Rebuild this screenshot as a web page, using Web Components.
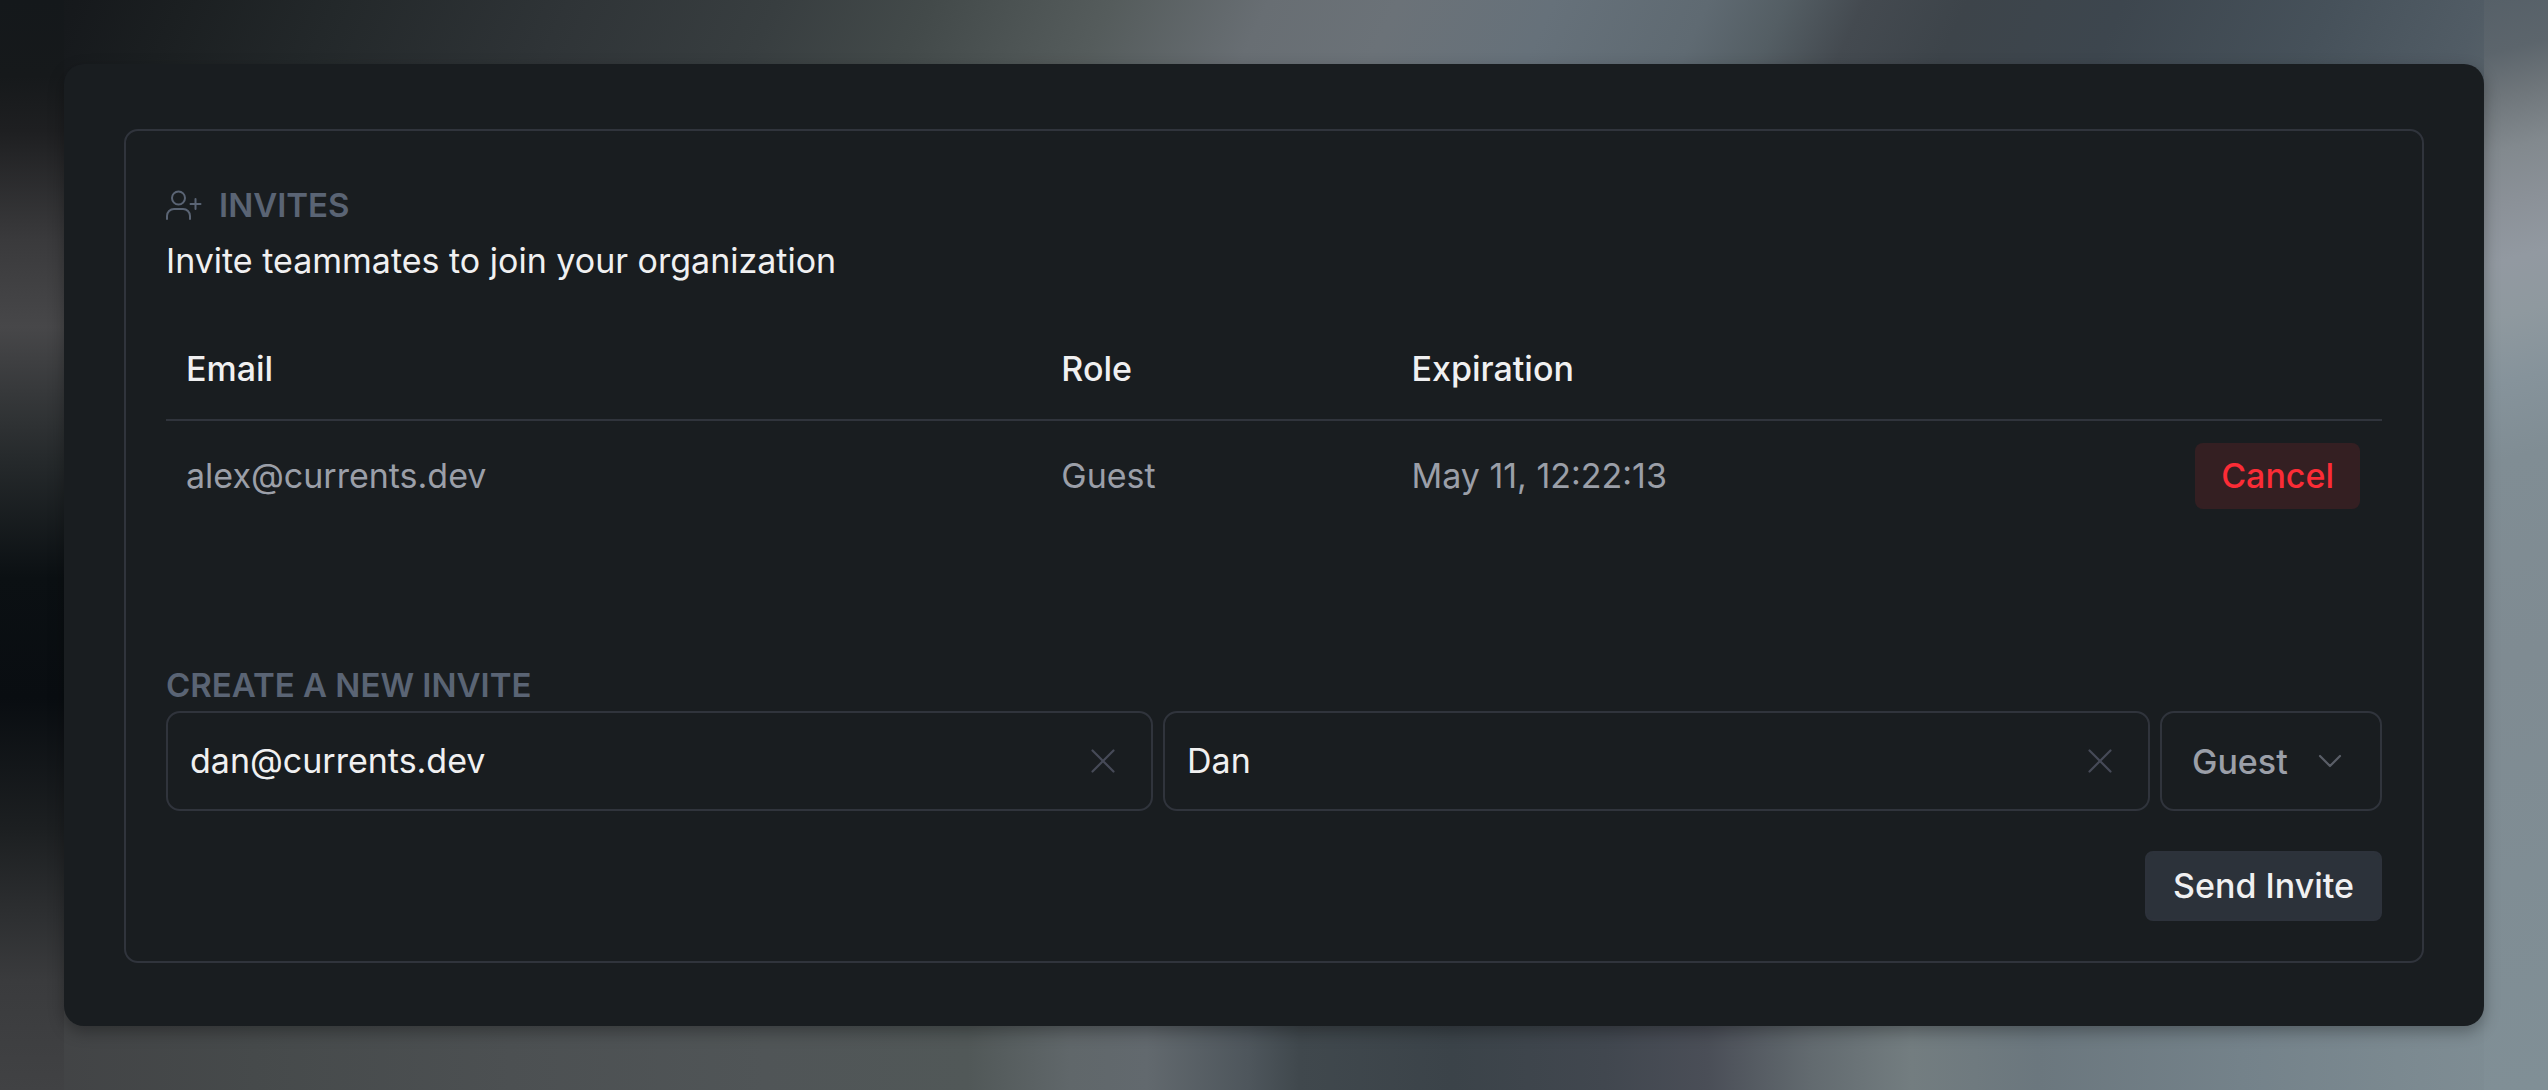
<!DOCTYPE html>
<html lang="en">
<head>
<meta charset="utf-8">
<title>Invites</title>
<style>
  html { min-height: 100%; background: #14181b; }
  body { margin: 0; min-height: 100vh; font-family: Inter, "Liberation Sans", sans-serif; color: #f0f0f1; }
</style>
</head>
<body>
<app-backdrop>
  <app-window>
    <bordered-panel>
      <section-title><user-plus-icon slot="icon"></user-plus-icon>Invites</section-title>
      <invite-intro>Invite teammates to join your organization</invite-intro>
      <invite-table email="alex@currents.dev" role-name="Guest" expiration="May 11, 12:22:13"></invite-table>
      <section-title>Create a new invite</section-title>
      <invite-form></invite-form>
    </bordered-panel>
  </app-window>
</app-backdrop>
<script>
const define = (name, html, setup) => {
  const template = document.createElement('template');
  template.innerHTML = html;
  customElements.define(name, class extends HTMLElement {
    constructor() {
      super();
      this.attachShadow({ mode: 'open' }).append(template.content.cloneNode(true));
    }
    connectedCallback() { if (setup) setup(this, this.shadowRoot); }
  });
};

// Blurred wallpaper: one gradient per edge, meeting in like colours at the corners
define('app-backdrop', `
<style>
  :host {
    display: block; box-sizing: border-box; min-height: 100vh; padding: 64px;
    background:
      linear-gradient(165deg, #566068 0, #5c656c 5%, #6e757a 9%, #82898e 14%, #8b9198 19%, #9299a1 24%, #8f999f 29%, #86939b 35%, #808d94 42%, #7f8b92 60%, #808f96 100%) right / 64px 100% no-repeat,
      linear-gradient(180deg, #14181b 0, #16191b 7%, #1e1f21 12%, #3a3a3c 22%, #474749 30%, #262a2c 42%, #0b1013 53%, #090d11 64%, #1c1f21 76%, #3a3b3d 90%, #414244 100%) left / 64px 100% no-repeat,
      linear-gradient(115deg, #13181a 0, #16191c 3%, #1b1f21 7%, #23282a 13%, #2f3437 22%, #383e40 30%, #434a4a 36%, #555c5c 43%, #686e73 49%, #6b7278 54%, #66717a 60%, #5f6a72 66%, #545e64 69%, #444a50 72%, #3d444a 76%, #3d464e 82%, #46515a 90%, #515c65 96%, #5f696f 100%) top / 100% 90px no-repeat,
      linear-gradient(90deg, #414244 0, #464a4b 10%, #4c5052 20%, #505557 30%, #515858 38%, #60676a 42%, #62696e 45%, #4e565c 49%, #40484d 51%, #3b4349 57%, #41474f 63%, #4a4e57 67%, #626a6f 71%, #737d80 75%, #6b777e 80%, #74828a 88%, #7c8a91 95%, #808f96 100%) bottom / 100% 90px no-repeat,
      #14181b;
  }
</style><slot></slot>`);

define('app-window', `
<style>
  :host {
    display: block; padding: 65px 60px 63px; border-radius: 20px; background: #191d20;
    box-shadow: 0 6px 16px rgba(0, 0, 0, .3);
  }
</style><slot></slot>`);

define('bordered-panel', `
<style>
  :host { display: block; padding: 48px 40px 40px; border: 2px solid #30343c; border-radius: 14px; }
</style><slot></slot>`);

define('section-title', `
<style>
  :host { display: block; }
  h2 {
    display: flex; align-items: center; gap: 16px; margin: 0;
    font-size: 33px; line-height: 52px; font-weight: 600; color: #5a6474; text-transform: uppercase;
  }
</style><h2><slot name="icon"></slot><span><slot></slot></span></h2>`);

define('user-plus-icon', `
<style>
  :host { display: block; width: 37px; height: 32px; }
  svg { display: block; }
</style>
<svg width="37" height="32" viewBox="0 0 37 32" fill="none" stroke="#5a6474" stroke-width="2" stroke-linecap="round" stroke-linejoin="round" aria-hidden="true">
  <circle cx="12.500" cy="9" r="6.500"/>
  <path d="M1 30V27a7 7 0 0 1 7-7h9a7 7 0 0 1 7 7v3M29.500 10v10M24.500 15h10"/>
</svg>`);

define('invite-intro', `
<style>
  :host { display: block; }
  p { margin: 0; font-size: 34px; line-height: 60px; }
</style><p><slot></slot></p>`);

define('invite-table', `
<style>
  :host { display: block; margin: 28px 0 128px; }
  table { width: 100%; border-collapse: separate; border-spacing: 0; table-layout: fixed; font-size: 34px; line-height: 56px; text-align: left; }
  th, td { box-sizing: border-box; padding: 22px 20px; }
  th { border-bottom: 2px solid #30343c; font-weight: 500; }
  td { color: #9b9fa8; }
  td:last-child { padding-right: 22px; text-align: right; }
  .email { width: 39.5%; }
  .role { width: 15.8%; }
  button {
    display: inline-block; vertical-align: top; height: 66px; padding: 0 26px; border: 0; border-radius: 8px;
    background: #341f22; color: #fb2c36; font: 500 34px/66px Inter, "Liberation Sans", sans-serif;
  }
</style>
<table>
  <thead><tr><th class="email">Email</th><th class="role">Role</th><th>Expiration</th><th></th></tr></thead>
  <tbody><tr><td id="email"></td><td id="role"></td><td id="expiration"></td><td><button type="button">Cancel</button></td></tr></tbody>
</table>`, (host, root) => {
  root.getElementById('email').textContent = host.getAttribute('email');
  root.getElementById('role').textContent = host.getAttribute('role-name');
  root.getElementById('expiration').textContent = host.getAttribute('expiration');
});

define('clearable-input', `
<style>
  :host { display: block; flex: 1 1 0; min-width: 0; }
  .box {
    display: flex; align-items: center; box-sizing: border-box; height: 100px;
    padding: 0 36px 0 22px; border: 2px solid #30343c; border-radius: 14px;
  }
  input {
    flex: 1; min-width: 0; height: 60px; padding: 0; border: 0; outline: 0; background: none;
    color: #f0f0f1; font: 400 34px/60px Inter, "Liberation Sans", sans-serif;
  }
  button { display: block; padding: 0; border: 0; background: none; }
  svg { display: block; }
</style>
<div class="box">
  <input id="field">
  <button type="button" aria-label="Clear">
    <svg width="24" height="24" viewBox="0 0 24 24" fill="none" stroke="#464a57" stroke-width="2.200" stroke-linecap="round"><path d="M1.500 1.500l21 21M22.500 1.500l-21 21"/></svg>
  </button>
</div>`, (host, root) => {
  const field = root.getElementById('field');
  field.type = host.getAttribute('type') || 'text';
  field.value = host.getAttribute('value');
  field.setAttribute('aria-label', host.getAttribute('label'));
  root.querySelector('button').onclick = () => { field.value = ''; field.focus(); };
});

define('role-select', `
<style>
  :host { display: block; }
  .box { display: grid; align-items: center; height: 100px; box-sizing: border-box; border: 2px solid #30343c; border-radius: 14px; }
  select {
    grid-area: 1 / 1; appearance: none; box-sizing: border-box; height: 96px; width: 218px; padding: 2px 76px 0 30px; border: 0; outline: 0;
    background: none; color: #9b9fa8; font: 500 34px/56px Inter, "Liberation Sans", sans-serif;
  }
  svg { grid-area: 1 / 1; justify-self: end; margin-right: 38px; pointer-events: none; }
</style>
<div class="box">
  <select aria-label="Role"><option>Guest</option><option>Member</option><option>Admin</option></select>
  <svg width="24" height="14" viewBox="0 0 24 14" fill="none" stroke="#5a5e67" stroke-width="2.200" stroke-linecap="round" stroke-linejoin="round" aria-hidden="true"><path d="M2 2l10 10L22 2"/></svg>
</div>`);

define('invite-form', `
<style>
  :host { display: block; }
  form { display: flex; flex-direction: column; gap: 40px; }
  .fields { display: flex; gap: 10px; }
  .submit {
    align-self: flex-end; height: 70px; padding: 0 26px; border: 2px solid #2d323b; border-radius: 8px;
    background: #2c323a; color: #f0f0f1; font: 500 34px/66px Inter, "Liberation Sans", sans-serif;
  }
</style>
<form onsubmit="return false">
  <div class="fields">
    <clearable-input type="email" label="Email" value="dan@currents.dev"></clearable-input>
    <clearable-input label="Name" value="Dan"></clearable-input>
    <role-select></role-select>
  </div>
  <button class="submit" type="submit">Send Invite</button>
</form>`);
</script>
</body>
</html>
